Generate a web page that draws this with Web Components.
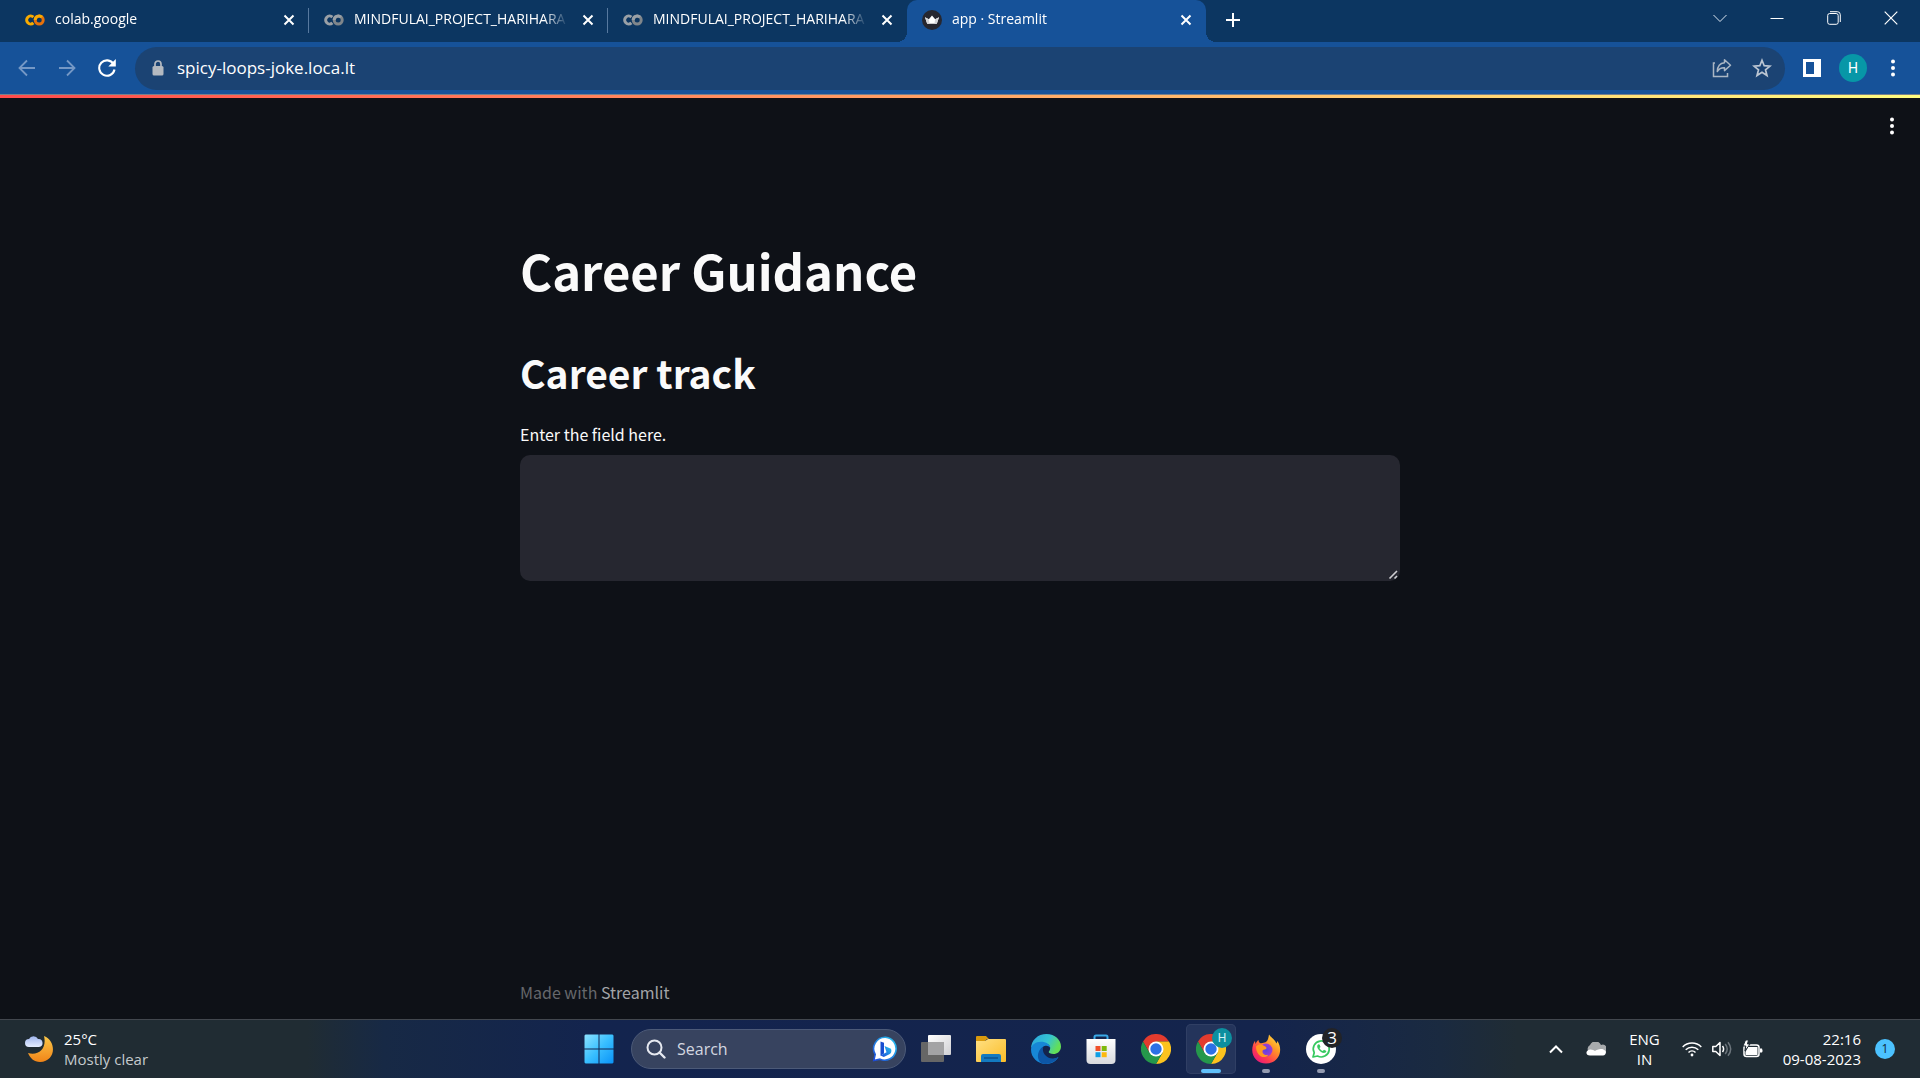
<!DOCTYPE html>
<html lang="en">
<head>
<meta charset="utf-8">
<title>app · Streamlit</title>
<style>
html, body { margin: 0; height: 100%; background: #0e1117; }
body { overflow: hidden; font-family: "Open Sans", "Noto Sans", sans-serif; }
</style>
</head>
<body>
<desktop-screen>
  <tab-strip slot="tabs">
    <browser-tab icon="colab" tone="warm" divided>colab.google</browser-tab>
    <browser-tab icon="colab" divided>MINDFULAI_PROJECT_HARIHARA</browser-tab>
    <browser-tab icon="colab">MINDFULAI_PROJECT_HARIHARA</browser-tab>
    <browser-tab icon="crown" active>app · Streamlit</browser-tab>
  </tab-strip>
  <address-bar slot="toolbar" url="spicy-loops-joke.loca.lt"></address-bar>
  <career-app slot="page"></career-app>
  <task-bar slot="taskbar"></task-bar>
</desktop-screen>

<script>
const ICONS = {
  colab: '<svg width="20" height="20" viewBox="0 0 20 20" fill="none" stroke-width="3"><path d="M8.4 7.1A4 4 0 1 0 8.4 12.9" stroke="var(--c1,#9aa0a6)"/><circle cx="14.2" cy="10" r="4" stroke="var(--c2,#80868b)"/><path d="M10.2 10a4 4 0 0 1 6.800-2.900" stroke="var(--c1,#9aa0a6)"/></svg>',
  crown: '<svg width="20" height="20" viewBox="0 0 20 20"><circle cx="10" cy="10" r="10" fill="#262730"/><path d="M3 7.2l3.8 2L10 5.4l3.2 3.8 3.8-2-2.2 6.6H5.2z" fill="#fff"/><path d="M3 7.2l3.8 2 .8 4.6H5.2zM17 7.2l-3.8 2-.8 4.6h2.4z" fill="#d5d6da"/></svg>',
  close: '<svg width="12" height="12" viewBox="0 0 12 12" stroke="#fff" stroke-width="2"><path d="M1.5 1.5l9 9M10.5 1.5l-9 9"/></svg>',
  plus: '<svg width="16" height="16" viewBox="0 0 16 16" stroke="#fff" stroke-width="2"><path d="M8 1v14M1 8h14"/></svg>',
  down: '<svg width="14" height="14" viewBox="0 0 14 14" fill="none" stroke="#dce6f2"><path d="M.5 4L7 10.500 13.500 4"/></svg>',
  minimise: '<svg width="14" height="14" viewBox="0 0 14 14" stroke="#fff"><path d="M.5 7.500h13"/></svg>',
  restore: '<svg width="14" height="14" viewBox="0 0 14 14" fill="none" stroke="#fff"><rect x=".7" y="2.500" width="10.500" height="10.800" rx="2"/><path d="M3 .7h7.300a3 3 0 0 1 3 3v7.300"/></svg>',
  shut: '<svg width="14" height="14" viewBox="0 0 14 14" stroke="#fff" stroke-width="1.200"><path d="M.7.700l12.600 12.600M13.300.700L.7 13.300"/></svg>',
  back: '<svg width="18" height="18" viewBox="0 0 18 18" fill="none" stroke="#7598c5" stroke-width="1.800"><path d="M17 9H2M9 1.500L1.500 9 9 16.500"/></svg>',
  forward: '<svg width="18" height="18" viewBox="0 0 18 18" fill="none" stroke="#7598c5" stroke-width="1.800"><path d="M1 9h15M9 1.500L16.500 9 9 16.500"/></svg>',
  reload: '<svg width="18" height="18" viewBox="0 0 18 18" fill="none"><path d="M15.500 5A7.700 7.700 0 1 0 16.500 10.500" stroke="#fff" stroke-width="2.100"/><path d="M17.800 0v7.500h-7.500z" fill="#fff"/></svg>',
  lock: '<svg width="12" height="16" viewBox="0 0 12 16"><rect x=".5" y="6" width="11" height="9.500" rx="1.500" fill="#b4b9c0"/><path d="M3 6.500V4a3 3 0 0 1 6 0v2.500" fill="none" stroke="#b4b9c0" stroke-width="1.700"/></svg>',
  share: '<svg width="20" height="20" viewBox="0 0 20 20" fill="none" stroke="#aab6c4" stroke-width="1.500"><path d="M3 5H1.500v13.500h14V15"/><path d="M12.500 1.800l6 5.400-6 5.400V9.700C9 9.500 6.800 11 5.300 13.500 5.500 8.500 8 5.200 12.500 4.800z" stroke-linejoin="round"/></svg>',
  star: '<svg width="20" height="20" viewBox="0 0 20 20" fill="none" stroke="#bcc6d2" stroke-width="1.700"><path d="M10 2.300l2.200 5.400 5.800.4-4.500 3.700 1.500 5.700-5-3.200-5 3.200 1.500-5.700L2 8.100l5.800-.4z"/></svg>',
  panel: '<svg width="18" height="18" viewBox="0 0 18 18"><path d="M0 0h18v18H0z" fill="#fff"/><path d="M3 3h8v12H3z" fill="#165299"/></svg>',
  dots: '<svg width="6" height="18" viewBox="0 0 6 18" fill="#fff"><circle cx="3" cy="2.500" r="2"/><circle cx="3" cy="9" r="2"/><circle cx="3" cy="15.500" r="2"/></svg>',
  weather: '<svg width="30" height="30" viewBox="0 0 30 30"><defs><linearGradient id="m" x2="0" y2="1"><stop stop-color="#fbc94a"/><stop offset="1" stop-color="#f08418"/></linearGradient><linearGradient id="c" x2="0" y2="1"><stop stop-color="#9fb5ee"/><stop offset="1" stop-color="#e4edff"/></linearGradient></defs><path d="M20 2c13 5 12 26-4 26-6 0-10-4-12-9 11 3 19-5 16-17z" fill="url(#m)"/><path d="M5 13a4 4 0 0 1 0-8 5 5 0 0 1 9 0 4 4 0 0 1 1 8z" fill="url(#c)"/></svg>',
  windows: '<svg width="30" height="30" viewBox="0 0 30 30"><defs><linearGradient id="w" x2="1" y2="1"><stop stop-color="#8ce2ff"/><stop offset=".5" stop-color="#39bfff"/><stop offset="1" stop-color="#0a93f8"/></linearGradient></defs><path d="M1.500.500H14.500V14.500H.5V1.500zM15.500.500h13l1 1v13h-14zM.5 15.500h14v14H1.500l-1-1zM15.500 15.500h14v13l-1 1h-13z" fill="url(#w)"/></svg>',
  search: '<svg width="20" height="20" viewBox="0 0 20 20" fill="none" stroke="#e6e9f0" stroke-width="2"><circle cx="8.500" cy="8.500" r="7"/><path d="M13.500 13.500l5 5" stroke-linecap="round" stroke-width="2.400"/></svg>',
  bing: '<svg width="26" height="26" viewBox="0 0 26 26"><defs><linearGradient id="b" x1="1" x2="0" y2="1"><stop stop-color="#27c5ee"/><stop offset="1" stop-color="#1c49d8"/></linearGradient></defs><path d="M13.500 1.200A11.500 11.500 0 1 1 8 23.200L1.800 24.500 3.200 18.500A11.500 11.500 0 0 1 13.500 1.200z" fill="#fff" stroke="url(#b)" stroke-width="1.600"/><path d="M8.500 5.500l3.500 1.300v10.700l-3.500 2.200z" fill="#174ed0"/><path d="M12.500 10l6.500 2.800c1 2.700 0 4.600-1.600 5.500L11.800 21 8.500 19.500l6-3.300z" fill="url(#b)"/></svg>',
  tasks: '<svg width="30" height="30" viewBox="0 0 30 30"><defs><linearGradient id="t" x2="1" y2="1"><stop stop-color="#fff"/><stop offset="1" stop-color="#d0d0d4"/></linearGradient></defs><rect x="7" y="1" width="23" height="20" rx="1" fill="url(#t)"/><rect y="8" width="23" height="20" rx="1" fill="#666"/><rect x="7" y="8" width="16" height="13" fill="#a3a3a5"/></svg>',
  folder: '<svg width="30" height="30" viewBox="0 0 30 30"><defs><linearGradient id="f" x2="1" y2="1"><stop stop-color="#ffe083"/><stop offset="1" stop-color="#fbbd28"/></linearGradient></defs><path d="M0 3q0-1 1-1h9l3 3h-2L8 8H0z" fill="#d8990d"/><path d="M0 7h9l3-2h17q1 0 1 1v21q0 1-1 1H1q-1 0-1-1z" fill="url(#f)"/><path d="M5 28v-6q0-2 2-2h16q2 0 2 2v6z" fill="#137ac0"/><path d="M8 24h14" stroke="#0b528f" stroke-width="1.500"/></svg>',
  edge: '<svg width="30" height="30" viewBox="0 0 30 30"><defs><linearGradient id="e1" x2="1" y2=".4"><stop stop-color="#2aa3e0"/><stop offset=".6" stop-color="#35c4d2"/><stop offset="1" stop-color="#63df57"/></linearGradient></defs><path d="M0 15C0 6 7 0 15.500 0 24 0 30 6 30 12.500c0 5-4 7.500-7.500 7.500-3 0-4.800-1.200-4.800-2 0-.8 1.500-1.500 1.500-4 0-2.500-3-5-6.700-5C6 9 0 12 0 15z" fill="url(#e1)"/><path d="M0 15.500C0 11 4.500 7.700 10 7.700c5 0 9 2.500 9.200 6-1-1.500-3-2.300-4.700-2-5 1-5.500 6-3.500 9.500 3 5 10.500 5.300 16.500 1.800C25 27.500 20 30 15 30 6.500 30 0 23.500 0 15.500z" fill="#1787d6"/><path d="M11 29.400C5.500 27 5 17 12.500 12.200 10 18 15 24.800 22 24.500c2.500-.1 4-.8 5.500-1.500C24 28.500 17.500 31 11 29.400z" fill="#0d56a6"/></svg>',
  store: '<svg width="30" height="30" viewBox="0 0 30 30"><defs><linearGradient id="s" x2="0" y2="1"><stop stop-color="#fff"/><stop offset="1" stop-color="#d8dade"/></linearGradient></defs><path d="M8.500 6V3q0-1.500 1.500-1.500h10q1.500 0 1.500 1.500v3" fill="none" stroke="#39a9e8" stroke-width="2"/><path d="M.5 5h29v21q0 4-4 4h-21q-4 0-4-4z" fill="url(#s)"/><path d="M9.500 12h5v5h-5z" fill="#f0502b"/><path d="M15.700 12h5v5h-5z" fill="#7eb90c"/><path d="M9.500 18.200h5v5h-5z" fill="#109fe5"/><path d="M15.700 18.200h5v5h-5z" fill="#fcb90e"/></svg>',
  chrome: '<svg width="30" height="30" viewBox="0 0 30 30"><path d="M2 7.500A15 15 0 0 1 28 7.500H15L8.500 18.800z" fill="#e33b2e"/><path d="M28 7.500A15 15 0 0 1 15 30l6.500-11.300L15 7.500z" fill="#fcc31e"/><path d="M2 7.500A15 15 0 0 0 15 30l6.500-11.300h-13z" fill="#25984b"/><circle cx="15" cy="15" r="7.500" fill="#fff"/><circle cx="15" cy="15" r="5.700" fill="#2c70e6"/></svg>',
  firefox: '<svg width="30" height="30" viewBox="0 0 30 30"><defs><linearGradient id="x" x1="1" x2=".2" y2="1"><stop stop-color="#ffec45"/><stop offset=".4" stop-color="#ff9826"/><stop offset=".75" stop-color="#ff3b4e"/><stop offset="1" stop-color="#e5177e"/></linearGradient><radialGradient id="p"><stop stop-color="#5a45e0"/><stop offset="1" stop-color="#a03bd0"/></radialGradient></defs><path d="M18 .5c2 3 6 5 7.500 9l1-2.500C33 17 27 29.500 15 29.500 5 29.500-1 20.500 2 11c.6-2 1-3 2-4l.5 3c1-2 2-3.500 3-4 0 2 1 3 2.500 3.300 2-.3 3.300-.6 4.500-1C17 7 17.500 3.500 18 .5z" fill="url(#x)"/><circle cx="15" cy="16" r="6.500" fill="url(#p)"/><path d="M5 12.500c3-3 6-2 8.500-.5 2 1 2.500 2 1.500 3-1.500 1-3 0-3.500 2-.5 3 3 5 6 3.500C14 26 5 22.500 5 12.500z" fill="#ff9820"/></svg>',
  whatsapp: '<svg width="30" height="30" viewBox="0 0 30 30"><circle cx="15" cy="15" r="15" fill="#fff"/><path d="M7 23l1.200-4.300A8 8 0 1 1 11.500 22z" fill="none" stroke="#36c95f" stroke-width="1.700" stroke-linejoin="round"/><path d="M12 10.500c-3 2.500 3 9.500 7 8.300 1.500-.6 1.500-1.600 1-2l-2-1-1.300 1.300c-1.500-.5-2.600-1.700-3.200-3L14.500 13l-.8-2.200q-.7-1-1.700-.3z" fill="#36c95f"/></svg>',
  up: '<svg width="14" height="10" viewBox="0 0 14 10" fill="none" stroke="#fff" stroke-width="2"><path d="M1 8.500l6-6 6 6"/></svg>',
  cloud: '<svg width="20" height="14" viewBox="0 0 20 14"><path d="M4 11A4.500 4.500 0 0 1 4 3a6 6 0 0 1 11 0 4.500 4.500 0 0 1 4 8z" fill="#a8abad"/><path d="M4 13.500c-5 0-4.500-5.500 0-6 2-.2 4 .8 5 1.500 2-2 8-3.500 10.500 0 1 2 0 4.500-2.500 4.500z" fill="#fff"/></svg>',
  wifi: '<svg width="20" height="16" viewBox="0 0 20 16" fill="none" stroke="#fff" stroke-width="1.500"><path d="M.7 6a13 13 0 0 1 18.600 0M3.700 8.700a9 9 0 0 1 12.600 0M6.500 11.500a5 5 0 0 1 7 0"/><circle cx="10" cy="14" r="1.400" fill="#fff" stroke="none"/></svg>',
  sound: '<svg width="20" height="16" viewBox="0 0 20 16" fill="none" stroke="#fff" stroke-width="1.500"><path d="M.8 5.500H3.800L8 1.500v13L3.800 10.500H.8z" stroke-linejoin="round"/><path d="M10.500 5q2.200 3 0 6"/><path d="M13.200 3q4 5 0 10M16 1.200q5.400 6.800 0 13.600" stroke="#6c757c"/></svg>',
  battery: '<svg width="21" height="18" viewBox="0 0 21 18"><rect x="2" y="5" width="15" height="11.500" rx="2.500" fill="none" stroke="#fff" stroke-width="1.500"/><path d="M6 7h9.500v8h-12v-3z" fill="#fff"/><path d="M18 8.500h2q1 2 0 4h-2z" fill="#fff"/><path d="M3.500 0h3L5.500 4h2.500L3 11l.8-5H1z" fill="#fff" stroke="#1f2a34"/></svg>'
};

class BaseElement extends HTMLElement {
  connectedCallback() {
    if (this.shadowRoot) return;
    this.attachShadow({ mode: 'open' }).innerHTML = `<style>
      :host, * { box-sizing: border-box; }
      :host([hidden]) { display: none; }
      button { display: flex; align-items: center; justify-content: center; flex: none; margin: 0; padding: 0; border: 0; background: none; color: inherit; font: inherit; }
      svg { display: block; flex: none; }
      ${this.css()}</style>${this.html()}`;
  }
}

customElements.define('desktop-screen', class extends BaseElement {
  css() { return `
    :host { display: flex; flex-direction: column; height: 100vh; color: #fff; }
    main { display: flex; flex: 1; min-height: 0; }
    ::slotted(career-app) { flex: 1; }`; }
  html() { return `<header><slot name="tabs"></slot><slot name="toolbar"></slot></header>
    <main><slot name="page"></slot></main><slot name="taskbar"></slot>`; }
});

customElements.define('tab-strip', class extends BaseElement {
  css() { return `
    :host { display: flex; justify-content: space-between; height: 42px; padding: 0 1px 0 10px; background: #0c3661; }
    nav { display: flex; flex: 1; min-width: 0; }
    .add { width: 54px; height: 40px; }
    .win { display: flex; }
    .win button { width: 57px; height: 35px; }`; }
  html() { return `<nav><slot></slot><button class="add" aria-label="New tab">${ICONS.plus}</button></nav>
    <div class="win"><button aria-label="Search tabs">${ICONS.down}</button><button aria-label="Minimise">${ICONS.minimise}</button><button aria-label="Restore">${ICONS.restore}</button><button aria-label="Close">${ICONS.shut}</button></div>`; }
});

customElements.define('browser-tab', class extends BaseElement {
  css() { return `
    :host { position: relative; display: flex; align-items: center; gap: 10px; flex: 0 1 299px; min-width: 0; height: 42px; padding: 0 10px 2px 15px; font-size: 14px; line-height: 20px; }
    :host([tone=warm]) { --c1: #f9ab00; --c2: #e8710a; }
    :host([active]) { background: #165299; border-radius: 10px 10px 0 0; }
    :host([active])::before, :host([active])::after { content: ""; position: absolute; bottom: 0; width: 10px; height: 10px; }
    :host([active])::before { right: 100%; background: radial-gradient(circle at 0 0, transparent 10px, #165299 10px); }
    :host([active])::after { left: 100%; background: radial-gradient(circle at 100% 0, transparent 10px, #165299 10px); }
    .title { flex: 1; min-width: 0; padding-bottom: 2px; overflow: hidden; white-space: nowrap; -webkit-mask-image: linear-gradient(to left, transparent, #000 24px); }
    button { width: 20px; height: 20px; }
    :host([divided])::after { content: ""; position: absolute; right: 0; top: 8px; width: 1px; height: 25px; background: #57799f; }`; }
  html() { return `${ICONS[this.getAttribute('icon')]}<span class="title"><slot></slot></span><button aria-label="Close tab">${ICONS.close}</button>`; }
});

customElements.define('address-bar', class extends BaseElement {
  css() { return `
    :host { display: flex; align-items: center; height: 53px; padding: 0 7px 0 7px; background: #165299; border-bottom: 1px solid #76808c; }
    .nav { width: 40px; height: 40px; }
    form { display: flex; align-items: center; flex: 1; height: 43px; margin: 0 7px 0 8px; padding: 0 3px 0 17px; border-radius: 22px; background: #1b4373; }
    input { flex: 1; min-width: 0; margin-left: 13px; padding: 0; border: 0; outline: 0; background: none; color: #fff; font: 17px/24px "Open Sans", "Noto Sans", sans-serif; }
    .avatar { width: 28px; height: 28px; margin: 0 6px 0 7px; border-radius: 50%; background: #0797a7; font: 14px/28px Roboto, sans-serif; }`; }
  html() { return `<button class="nav" aria-label="Back">${ICONS.back}</button><button class="nav" aria-label="Forward">${ICONS.forward}</button><button class="nav" aria-label="Reload">${ICONS.reload}</button>
    <form>${ICONS.lock}<input aria-label="Address" value="${this.getAttribute('url')}"><button type="button" class="nav" aria-label="Share">${ICONS.share}</button><button type="button" class="nav" aria-label="Bookmark">${ICONS.star}</button></form>
    <button class="nav" aria-label="Side panel">${ICONS.panel}</button><button class="avatar">H</button><button class="nav" aria-label="Menu">${ICONS.dots}</button>`; }
});

customElements.define('career-app', class extends BaseElement {
  css() { return `
    :host { display: flex; flex-direction: column; min-width: 0; background: #0e1117; color: #fafafa; font-family: "Noto Sans CJK SC", "Noto Sans", sans-serif; }
    .deco { height: 3px; background: linear-gradient(90deg, #ff4b4b, #fffd80); }
    header { display: flex; justify-content: flex-end; padding: 8px; }
    header button { width: 40px; height: 40px; }
    .column { width: 100%; max-width: 880px; margin: 0 auto; }
    section { padding-top: 83px; flex: 1; }
    h1 { margin: 0 0 42px; font-size: 49px; line-height: 66px; font-weight: 700; }
    h2 { margin: 0 0 21px; font-size: 39px; line-height: 54px; font-weight: 600; }
    label { display: block; margin-bottom: 7px; font-size: 16px; line-height: 28px; }
    textarea { display: block; width: 100%; height: 126px; padding: 20px; border: 0; border-radius: 10px; outline: 0; resize: vertical; background: #262730; color: inherit; font: inherit; color-scheme: dark; }
    textarea::-webkit-resizer { background: url("data:image/svg+xml,%3Csvg xmlns='http://www.w3.org/2000/svg' width='15' height='15' stroke='%23cfcfd3' stroke-width='1.600'%3E%3Cpath d='M4.500 12.500L12 5M9.500 12.500L12 10'/%3E%3C/svg%3E") right bottom / 15px 15px no-repeat; }
    footer { padding-bottom: 15px; font-size: 16px; line-height: 24px; color: #66686c; }
    a { color: #a3a5a8; text-decoration: none; }`; }
  html() { return `<div class="deco"></div><header><button aria-label="Main menu">${ICONS.dots}</button></header>
    <section class="column"><h1>Career Guidance</h1><h2>Career track</h2><label for="field">Enter the field here.</label><textarea id="field"></textarea></section>
    <footer class="column">Made with <a href="#streamlit">Streamlit</a></footer>`; }
});

customElements.define('task-button', class extends BaseElement {
  css() { return `
    :host { display: block; flex: none; }
    button { position: relative; width: 50px; height: 50px; border-radius: 5px; }
    :host([state=active]) button { background: #24345b; box-shadow: inset 0 0 0 1px #303f64; }
    :host([state])  button::after { content: ""; position: absolute; left: 21px; bottom: 1px; width: 8px; height: 4px; border-radius: 2px; background: #949bb0; }
    :host([state=active]) button::after { left: 15px; width: 20px; background: #60c0fa; }
    .badge { position: absolute; left: 26px; top: 4px; width: 20px; height: 20px; border-radius: 50%; background: #0d8f9f; color: #d4f2f4; font: 12px/20px Roboto, sans-serif; text-align: center; }
    :host([dark]) .badge { background: #222327; color: #fff; font: 17px/20px "Open Sans", sans-serif; }`; }
  html() {
    const badge = this.getAttribute('badge');
    return `<button aria-label="${this.getAttribute('icon')}">${ICONS[this.getAttribute('icon')]}${badge ? `<span class="badge">${badge}</span>` : ''}</button>`;
  }
});

customElements.define('task-bar', class extends BaseElement {
  css() { return `
    :host { display: grid; grid-template-columns: 1fr auto 1fr; align-items: center; height: 59px; border-top: 1px solid #42474e; background: linear-gradient(90deg, #202c33 0, #202c33 16%, #172945 20%, #13244e 31%, #14244c 66%, #1a2a40 75%, #202c34 79%); font-size: 15px; line-height: 20px; }
    .weather { display: flex; align-items: center; gap: 10px; padding-left: 24px; }
    .weather small { display: block; font-size: 15px; color: #c5cacd; }
    .apps { display: flex; align-items: center; gap: 5px; }
    label { display: flex; align-items: center; width: 275px; height: 40px; margin-left: 2px; padding: 0 7px 0 14px; border: 1px solid #4c5a78; border-radius: 20px; background: #37435f; }
    input { flex: 1; min-width: 0; margin-left: 11px; padding: 0; border: 0; outline: 0; background: none; font: 16px/24px "Open Sans", sans-serif; }
    input::placeholder { color: #d3d7e0; opacity: 1; }
    .tray { display: flex; align-items: center; justify-content: flex-end; padding-right: 25px; }
    .lang { margin: 0 22px 0 23px; text-align: center; }
    .cloud { margin-left: 23px; }
    .status { display: flex; align-items: center; gap: 10px; }
    .clock { margin: 0 14px 0 20px; text-align: right; }
    .count { width: 20px; height: 20px; border-radius: 50%; background: #4cc2ff; color: #102a3a; font-size: 12px; line-height: 20px; text-align: center; }`; }
  html() { return `<div class="weather">${ICONS.weather}<div>25°C<small>Mostly clear</small></div></div>
    <div class="apps"><task-button icon="windows"></task-button>
      <label>${ICONS.search}<input type="search" aria-label="Search" placeholder="Search">${ICONS.bing}</label>
      <task-button icon="tasks"></task-button><task-button icon="folder"></task-button><task-button icon="edge"></task-button><task-button icon="store"></task-button><task-button icon="chrome"></task-button>
      <task-button icon="chrome" state="active" badge="H"></task-button><task-button icon="firefox" state="open"></task-button><task-button icon="whatsapp" state="open" badge="3" dark></task-button></div>
    <div class="tray"><button aria-label="Hidden icons">${ICONS.up}</button><div class="cloud">${ICONS.cloud}</div><div class="lang">ENG<br>IN</div>
      <div class="status">${ICONS.wifi}${ICONS.sound}${ICONS.battery}</div><div class="clock">22:16<br>09-08-2023</div><div class="count">1</div></div>`; }
});
</script>
</body>
</html>
